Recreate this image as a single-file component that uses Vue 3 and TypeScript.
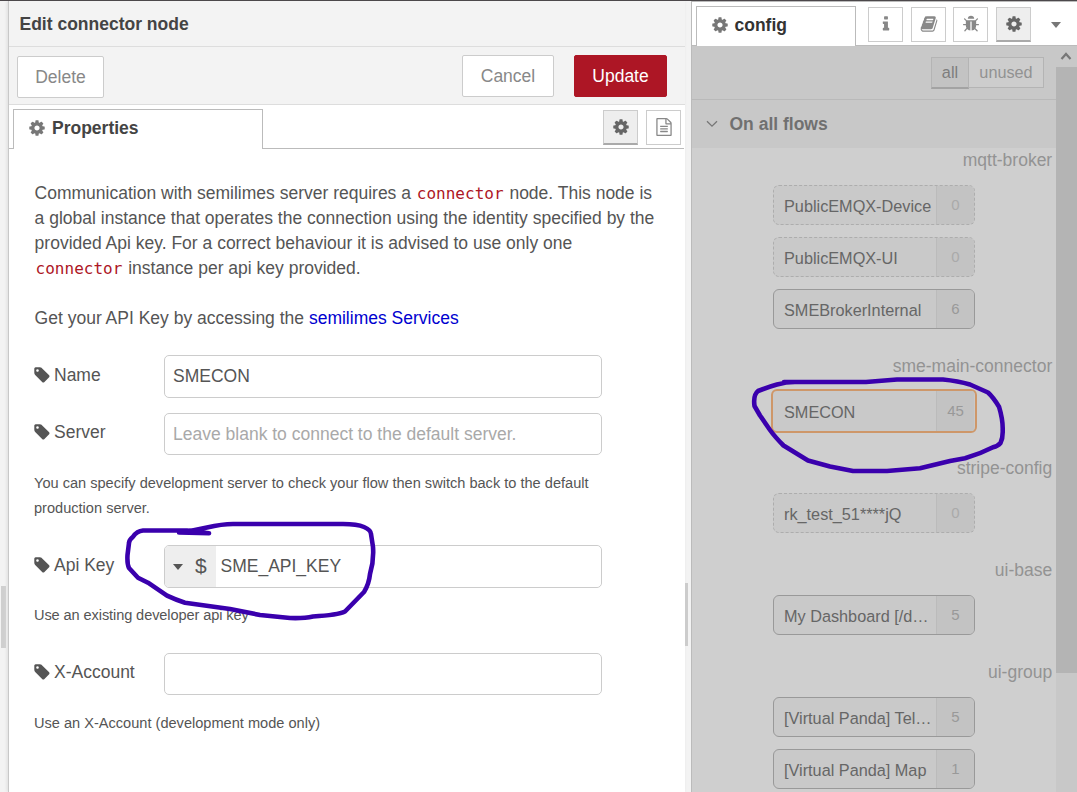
<script setup lang="ts">
import { ref } from 'vue'

interface ConfigNode { label: string; users: number; selected?: boolean }
interface Category { name: string; nodes: ConfigNode[] }

const icons = {
  cog: 'M1152 896q0-106-75-181t-181-75-181 75-75 181 75 181 181 75 181-75 75-181zm512-109v222q0 12-8 23t-20 13l-185 28q-19 54-39 91 35 50 107 138 10 12 10 25t-9 23q-27 37-99 108t-94 71q-12 0-26-9l-138-108q-44 23-91 38-16 136-29 186-7 28-36 28h-222q-14 0-24.500-8.500t-11.500-21.500l-28-184q-49-16-90-37l-141 107q-10 9-25 9-14 0-25-11-126-114-165-168-7-10-7-23 0-12 8-23 15-21 51-66.500t54-70.500q-27-50-41-99l-183-27q-13-2-21-12.500t-8-23.500v-222q0-12 8-23t19-13l186-28q14-46 39-92-40-57-107-138-10-12-10-24 0-10 9-23 26-36 98.500-107.500t94.500-71.500q13 0 26 10l138 107q44-23 91-38 16-136 29-186 7-28 36-28h222q14 0 24.500 8.500t11.500 21.500l28 184q49 16 90 37l142-107q9-9 24-9 13 0 25 10 129 119 165 170 7 8 7 22 0 12-8 23-15 21-51 66.500t-54 70.500q26 50 41 98l183 28q13 2 21 12.500t8 23.500z',
  tag: 'M576 448q0-53-37.500-90.500t-90.500-37.500-90.500 37.500-37.500 90.500 37.500 90.500 90.500 37.500 90.500-37.500 37.500-90.500zm1067 576q0 53-37 90l-491 492q-39 37-91 37-53 0-90-37l-715-716q-38-37-64.500-101t-26.500-117v-416q0-52 38-90t90-38h416q53 0 117 26.500t102 64.500l715 714q37 39 37 91z',
  info: 'M1216 1344v128q0 26-19 45t-45 19h-512q-26 0-45-19t-19-45v-128q0-26 19-45t45-19h64v-384h-64q-26 0-45-19t-19-45v-128q0-26 19-45t45-19h384q26 0 45 19t19 45v576h64q26 0 45 19t19 45zm-128-1152v192q0 26-19 45t-45 19h-256q-26 0-45-19t-19-45v-192q0-26 19-45t45-19h256q26 0 45 19t19 45z',
  book: 'M1703 478q40 57 18 129l-275 906q-19 64-76.500 107.500t-122.500 43.500h-923q-77 0-148.500-53.500t-99.500-131.500q-24-67-2-127 0-4 3-27t4-37q1-8-3-21.500t-3-19.500q2-11 8-21t16.500-23.500 16.500-23.500q23-38 45-91.500t30-91.500q3-10 .5-30t-.5-28q3-11 17-28t17-23q21-36 42-92t25-90q1-9-2.500-32t.5-28q4-13 22-30.500t22-22.500q19-26 42.500-84.500t27.500-96.500q1-8-3-25.500t-2-26.500q2-8 9-18t18-23 17-21q8-12 16.500-30.500t15-35 16-36 19.500-32 26.500-23.500 36-11.500 47.500 5.500l-1 3q38-9 51-9h761q74 0 114 56t18 130l-274 906q-36 119-71.500 153.500t-128.500 34.500h-869q-27 0-38 15-11 16-1 43 24 70 144 70h923q29 0 56-15.500t35-41.500l300-987q7-22 5-57 38 15 59 43zm-1064 2q-4 13 2 22.500t20 9.500h608q13 0 25.500-9.500t16.500-22.500l21-64q4-13-2-22.500t-20-9.500h-608q-13 0-25.500 9.500t-16.500 22.500zm-83 256q-4 13 2 22.500t20 9.500h608q13 0 25.500-9.500t16.500-22.500l21-64q4-13-2-22.500t-20-9.500h-608q-13 0-25.500 9.500t-16.500 22.500z',
  bug: 'M1696 960q0 26-19 45t-45 19h-224q0 171-67 290l208 209q19 19 19 45t-19 45q-18 19-45 19t-45-19l-198-197q-5 5-15 13t-42 28.500-65 36.500-82 29-97 13v-896h-128v896q-51 0-101.500-13.500t-87-33-66-39-43.500-32.500l-15-14-183 207q-20 21-48 21-24 0-43-16-19-18-20.500-44.500t15.500-46.500l202-227q-58-114-58-274h-224q-26 0-45-19t-19-45 19-45 45-19h224v-294l-173-173q-19-19-19-45t19-45 45-19 45 19l173 173h844l173-173q19-19 45-19t45 19 19 45-19 45l-173 173v294h224q26 0 45 19t19 45zm-480-576h-640q0-133 93.500-226.500t226.500-93.500 226.500 93.500 93.500 226.500z',
  file: 'M1596 380q28 28 48 76t20 88v1152q0 40-28 68t-68 28h-1344q-40 0-68-28t-28-68v-1600q0-40 28-68t68-28h896q40 0 88 20t76 48zm-444-244v376h376q-10-29-22-41l-313-313q-12-12-41-22zm384 1528v-1024h-416q-40 0-68-28t-28-68v-416h-768v1536h1280zm-1024-864q0-14 9-23t23-9h704q14 0 23 9t9 23v64q0 14-9 23t-23 9h-704q-14 0-23-9t-9-23v-64zm736 224q14 0 23 9t9 23v64q0 14-9 23t-23 9h-704q-14 0-23-9t-9-23v-64q0-14 9-23t23-9h704zm0 256q14 0 23 9t9 23v64q0 14-9 23t-23 9h-704q-14 0-23-9t-9-23v-64q0-14 9-23t23-9h704z',
}

const sidebarButtons = [
  { id: 'info', path: icons.info },
  { id: 'book', path: icons.book },
  { id: 'bug', path: icons.bug },
  { id: 'cog', path: icons.cog },
]

const name = ref('SMECON')
const server = ref('')
const apiKey = ref('SME_API_KEY')
const account = ref('')

const categories: Category[] = [
  {
    name: 'mqtt-broker',
    nodes: [
      { label: 'PublicEMQX-Device', users: 0 },
      { label: 'PublicEMQX-UI', users: 0 },
      { label: 'SMEBrokerInternal', users: 6 },
    ],
  },
  { name: 'sme-main-connector', nodes: [{ label: 'SMECON', users: 45, selected: true }] },
  { name: 'stripe-config', nodes: [{ label: 'rk_test_51****jQ', users: 0 }] },
  { name: 'ui-base', nodes: [{ label: 'My Dashboard [/d…', users: 5 }] },
  {
    name: 'ui-group',
    nodes: [
      { label: '[Virtual Panda] Tel…', users: 5 },
      { label: '[Virtual Panda] Map', users: 1 },
    ],
  },
]
</script>

<template>
  <div class="app">
    <div class="gutter"><span class="grip"></span></div>

    <section class="editor">
      <header class="title">Edit connector node</header>
      <div class="toolbar">
        <button class="btn delete">Delete</button>
        <button class="btn cancel">Cancel</button>
        <button class="btn primary">Update</button>
      </div>
      <div class="tabs">
        <div class="tab">
          <svg class="icon" viewBox="0 0 1792 1792"><path :d="icons.cog" /></svg>
          <span>Properties</span>
        </div>
        <div class="tab-tools">
          <button class="square active"><svg class="icon" viewBox="0 0 1792 1792"><path :d="icons.cog" /></svg></button>
          <button class="square file"><svg class="icon" viewBox="0 0 1792 1792"><path :d="icons.file" /></svg></button>
        </div>
      </div>

      <div class="form">
        <p class="intro">
          <span>Communication with semilimes server requires a <code>connector</code> node. This node is</span><br>
          <span>a global instance that operates the connection using the identity specified by the</span><br>
          <span>provided Api key. For a correct behaviour it is advised to use only one</span><br>
          <span><code>connector</code> instance per api key provided.</span>
        </p>
        <p class="intro get">Get your API Key by accessing the <a>semilimes Services</a></p>

        <div class="row name-row">
          <label><svg class="icon" viewBox="0 0 1792 1792"><path :d="icons.tag" /></svg>Name</label>
          <input v-model="name" type="text">
        </div>
        <div class="row server-row">
          <label><svg class="icon" viewBox="0 0 1792 1792"><path :d="icons.tag" /></svg>Server</label>
          <input v-model="server" type="text" placeholder="Leave blank to connect to the default server.">
        </div>
        <p class="hint server-hint">You can specify development server to check your flow then switch back to the default<br>production server.</p>
        <div class="row key-row">
          <label><svg class="icon" viewBox="0 0 1792 1792"><path :d="icons.tag" /></svg>Api Key</label>
          <div class="typed">
            <span class="type"><i class="caret"></i><span>$</span></span>
            <input v-model="apiKey" type="text">
          </div>
        </div>
        <p class="hint key-hint">Use an existing developer api key</p>
        <div class="row">
          <label><svg class="icon" viewBox="0 0 1792 1792"><path :d="icons.tag" /></svg>X-Account</label>
          <input v-model="account" type="text">
        </div>
        <p class="hint account-hint">Use an X-Account (development mode only)</p>
      </div>
    </section>

    <div class="separator"><span class="grip"></span></div>

    <aside class="sidebar">
      <div class="side-tabs">
        <div class="side-tab">
          <svg class="icon" viewBox="0 0 1792 1792"><path :d="icons.cog" /></svg>
          <span>config</span>
        </div>
        <div class="side-tools">
          <button v-for="b in sidebarButtons" :key="b.id" class="square" :class="[b.id, { active: b.id === 'cog' }]">
            <svg class="icon" viewBox="0 0 1792 1792"><path :d="b.path" /></svg>
          </button>
        </div>
        <i class="caret"></i>
      </div>
      <div class="side-body">
        <div class="content">
          <div class="filter">
            <span class="all">all</span><span class="unused">unused</span>
          </div>
          <div class="group-head">
            <svg class="chevron" viewBox="0 0 12 8"><path d="M1 1.200l5 5 5-5" /></svg>
            <span>On all flows</span>
          </div>
          <div v-for="c in categories" :key="c.name" class="category">
            <div class="cat-name">{{ c.name }}</div>
            <div
              v-for="n in c.nodes"
              :key="n.label"
              class="node"
              :class="{ idle: n.users === 0, selected: n.selected }"
            >
              <span class="node-label">{{ n.label }}</span>
              <span class="node-users">{{ n.users }}</span>
            </div>
          </div>
        </div>
        <div class="scrollbar">
          <svg class="up" viewBox="0 0 12 10"><path d="M1.500 8l4.500-5 4.500 5" /></svg>
          <div class="thumb"></div>
        </div>
      </div>
    </aside>

    <svg class="ink" viewBox="0 0 1077 792">
      <path d="M209 533.300L179 532.500Q192 531 207 527.500T233 524H343Q357 524 364 527T371 534L373 547Q374 561 370 574Q369 584 364 592L345 611.500Q338 615 313 616.500Q304 618.500 290 618L260 615L230 609L185 602.700Q176 600 167 595.700L148 582.700L138 577.700L129 568Q127 564 127.500 555L129 543Q129 540 133 536.700Q137 531 143 530.500L187 530.500L209 533.300" />
      <path d="M784 382H866L897 379.500H943Q958 381 970 384.500L988 392.500Q993 397 999 406.700Q1003 420 1002.700 430Q1003 438 1000.500 443Q998 446 993 447.300Q980 454 965 458.300L950 461L920 468.300L887 471H853L830 466.500L808 460.500L783.500 445.500Q775 437 770 430L760 415.500L754.500 406Q753 395 758 391Q768 387 777 384.500T795 382" />
    </svg>
  </div>
</template>

<style>
html, body { margin: 0; background: #fff; }
</style>

<style scoped>
* { box-sizing: border-box; }
.app {
  position: relative;
  display: flex;
  width: 1077px;
  height: 792px;
  overflow: hidden;
  border-top: 1px solid #4c484b;
  background: #f3f3f3;
  font-family: "Liberation Sans", Arial, sans-serif;
  font-size: 17.5px;
  color: #555;
}
.icon { display: block; flex: none; width: 18px; height: 18px; fill: currentColor; }
button { padding: 0; font: inherit; color: #888; background: #fff; border: 1px solid #ccc; border-radius: 2px; }

.gutter { flex: none; width: 8px; padding-top: 585px; }
.gutter .grip { display: block; width: 5px; height: 62px; margin-left: 1px; background: #cfcfcf; }
.editor { flex: none; width: 677px; border-left: 1px solid #c8c8c8; background: #fff; box-shadow: -1px 0 3px #ddd; }
.title { height: 46px; padding-left: 10.500px; line-height: 46px; font-weight: bold; color: #444; background: #f3f3f3; border-bottom: 1px solid #ddd; }
.toolbar { display: flex; align-items: flex-start; height: 58px; padding: 8px 18px 0 8px; background: #f3f3f3; border-bottom: 1px solid #ddd; }
.btn { height: 42px; }
.delete { width: 87px; margin-top: 1px; margin-right: auto; }
.cancel { width: 92px; margin-right: 20px; }
.primary { width: 93px; color: #fff; background: #ad1625; border-color: #ad1625; }
.tabs { display: flex; justify-content: space-between; height: 44px; border-bottom: 1px solid #bbb; margin-right: 1px; padding: 4px 3px 0 4px; }
.tab { display: flex; align-items: center; gap: 6px; width: 250px; height: 40px; padding: 0 0 3px 14px; border: 1px solid #bbb; border-bottom: 0; background: #fff; font-weight: bold; color: #444; }
.tab .icon, .side-tab .icon { color: #777; }
.tab-tools { display: flex; gap: 8px; padding-top: 1px; }
.square { display: flex; align-items: center; justify-content: center; width: 35px; height: 35px; border-radius: 0; }
.square.active { background: #eee; border-bottom: 2px solid #aaa; color: #666; }
.square.file { padding-bottom: 2px; }

.form { padding: 32px 0 0 25px; }
p { margin: 0; }
.intro { height: 100px; line-height: 25px; white-space: nowrap; padding-left: 0.600px; }
.intro.get { height: 25px; margin-top: 25px; }
code { padding: 0 1px; line-height: 1; font-family: "DejaVu Sans Mono", monospace; font-size: 16px; color: #ad1625; }
a { color: #0000d0; }
.row { display: flex; height: 42px; }
.row label { display: flex; align-items: center; width: 130px; padding-bottom: 3px; }
.row label .icon { margin: -1px 3px 0 -1px; }
input { width: 438px; height: 42px; margin: 0; padding: 0 8px; font: inherit; color: #555; background: #fff; border: 1px solid #ccc; border-radius: 5px; outline: none; }
input::placeholder { color: #a9a9a9; opacity: 1; }
.name-row { margin-top: 24px; height: 43px; }
.name-row input { height: 43px; }
.server-row { margin-top: 15px; }
.hint { font-size: 14.590px; line-height: 25px; white-space: nowrap; }
.server-hint { margin-top: 16px; }
.key-row { margin-top: 24px; height: 43px; }
.typed { display: flex; width: 438px; height: 43px; overflow: hidden; border: 1px solid #ccc; border-radius: 5px; }
.type { display: flex; align-items: center; gap: 12px; flex: none; width: 51px; padding-left: 8px; background: #eee; font-size: 21px; }
.type span { margin-top: -2px; }
.caret { display: block; border: 5.500px solid transparent; border-top: 6px solid #555; border-bottom: 0; }
.typed input { height: 41px; padding: 0 4.500px; border: 0; }
.key-hint { margin: 15px 0 25px; letter-spacing: -0.1px; }
.account-hint { margin-top: 16px; }

.separator { flex: none; width: 6px; padding-top: 582px; }
.separator .grip { display: block; width: 3px; height: 63px; background: #ccc; }
.sidebar { flex: none; width: 386px; border-left: 1px solid #bbb; }
.side-tabs { display: flex; height: 45px; padding: 5px 0 0 4px; background: #fff; border-top: 1px solid #bbb; border-bottom: 1px solid #bbb; }
.side-tab { display: flex; align-items: center; gap: 6px; flex: none; width: 160px; height: 40px; margin-top: -1px; padding: 0 0 3px 13.500px; background: #fff; border: 1px solid #bbb; border-bottom: 0; font-weight: bold; color: #333; }
.side-tab .icon { margin-top: -1px; }
.side-tools { display: flex; gap: 8px; margin-left: 12px; }
.side-tools .bug { margin-left: -1px; }
.side-tools .icon { margin-top: -1px; }
.side-tabs .caret { margin: 15px 0 0 19.500px; border-top-color: #777; }
.side-body { display: flex; height: 746px; }
.content { width: 364px; height: 746px; overflow: hidden; background: #cfcfcf; }
.filter { display: flex; justify-content: flex-end; height: 54px; padding: 11px 12px 0 0; background: #c8c8c8; border-bottom: 1px solid #b9b9b9; color: #929292; }
.filter span { height: 31px; line-height: 29px; text-align: center; font-size: 16.250px; border: 1px solid #b4b4b4; background: #cdcdcd; }
.filter .all { width: 38px; height: 32px; border-bottom: 2px solid #a3a3a3; background: #c3c3c3; color: #7d7d7d; }
.filter .unused { width: 75px; border-left: 0; }
.group-head { display: flex; align-items: center; gap: 12px; height: 48px; padding-left: 13.500px; background: #c8c8c8; font-weight: bold; color: #707070; }
.chevron { width: 12px; height: 8px; fill: none; stroke: #777; stroke-width: 1.300; }
.category { padding-bottom: 13px; }
.cat-name { height: 37px; padding-right: 3.800px; line-height: 24px; text-align: right; color: #939393; }
.node { display: flex; width: 202px; height: 40px; margin: 0 0 12px 81px; overflow: hidden; border: 1px solid #999; border-radius: 6px; background: #c9c9c9; }
.node.idle { border: 1px dashed #adadad; }
.node.selected { width: 206px; height: 44px; margin: -2px 0 10px 79px; padding: 0 1px; border: 2px solid #ce9769; }
.node-label { flex: 1; padding-left: 10px; line-height: 41px; font-size: 16.250px; white-space: nowrap; color: #666; }
.node-users { width: 38px; border-left: 1px solid #bbb; background: #c3c3c3; line-height: 38px; text-align: center; font-size: 15px; color: #999; }
.selected .node-label { line-height: 42px; }
.selected .node-users { line-height: 40px; }
.idle .node-users { color: #aaa; }
.scrollbar { width: 21px; background: #c8c8c8; }
.up { display: block; width: 12px; height: 10px; margin: 5px 0 6px 4px; fill: none; stroke: #777; stroke-width: 2.200; }
.thumb { height: 606px; background: #b4b4b4; }

.ink { position: absolute; left: 0; top: -1px; width: 1077px; height: 792px; fill: none; stroke: #3a00ad; stroke-width: 4.600; stroke-linecap: round; stroke-linejoin: round; pointer-events: none; }
</style>
